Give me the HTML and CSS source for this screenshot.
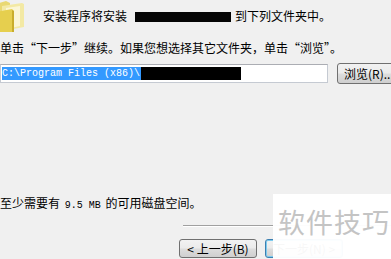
FILE: index.html
```html
<!DOCTYPE html>
<html lang="zh-CN">
<head>
  <meta charset="UTF-8">
  <title>安装位置</title>
  <link rel="stylesheet" href="styles.css">
</head>
<body>
  <div class="page">
    <div class="header">
      <svg class="folder" width="28" height="32" viewBox="0 0 28 32">
        <path d="M-4 4 L6 1 L10 3 L10 30 L-4 32 Z" fill="#e9d872"/>
        <path d="M2 6 L22 3 L24 4 L24 27 L2 31 Z" fill="#f3e9a4"/>
        <path d="M6 8 L20 6 L20 26 L6 29 Z" fill="#fbf6d6"/>
        <path d="M-4 12 L12 9 L14 11 L14 32 L-4 32 Z" fill="#e6cf4e"/>
        <path d="M12 10 L14 11 L14 32 L12 32 Z" fill="#c9ad2c"/>
      </svg>
      <div class="title">安装程序将安装 <span class="redact"></span> 到下列文件夹中。</div>
    </div>

    <p class="intro">单击“下一步”继续。如果您想选择其它文件夹，单击“浏览”。</p>

    <div class="path-row">
      <div class="path-box"><span class="sel">C:\Program Files (x86)\</span><span class="sel-black"></span></div>
      <button class="btn browse">浏览(R)...</button>
    </div>

    <p class="space">至少需要有 <span class="mono">9.5 MB</span> 的可用磁盘空间。</p>

    <div class="separator"></div>

    <div class="buttons">
      <button class="btn back">&lt; 上一步(B)</button>
      <button class="btn next">下一步(N) &gt;</button>
    </div>

    <div class="watermark">软件技巧</div>
  </div>
</body>
</html>
```

FILE: styles.css
```css
body {
  margin: 0;
  background: #f0f0f0;
  font-family: "Noto Sans CJK SC", "Noto Sans", sans-serif;
  font-size: 12px;
  color: #000;
}

.page {
  position: relative;
  width: 391px;
  height: 259px;
  overflow: hidden;
}

.header {
  display: flex;
  align-items: center;
  height: 32px;
}

.folder {
  flex: none;
}

.title {
  margin-left: 15px;
  line-height: 16px;
  display: flex;
  align-items: center;
}

.redact {
  display: inline-block;
  width: 96px;
  height: 10px;
  margin: 1px 4px 0 8px;
  background: #050505;
}

.intro {
  margin: 8px 0 0;
  line-height: 16px;
  white-space: nowrap;
}

.path-row {
  display: flex;
  align-items: flex-start;
  margin-top: 7px;
  height: 21px;
}

.path-box {
  flex: none;
  box-sizing: border-box;
  width: 328px;
  height: 19px;
  margin-top: 1px;
  background: #fff;
  border: 1px solid #c5cad2;
  border-top-color: #abadb3;
  display: flex;
  align-items: center;
  padding-left: 1px;
}

.sel {
  font-family: "Liberation Mono", monospace;
  font-size: 10px;
  line-height: 13px;
  background: #3399ff;
  color: #fff;
  white-space: pre;
  padding-right: 1px;
}

.sel-black {
  display: inline-block;
  width: 100px;
  height: 13px;
  background: #000;
}

.btn {
  box-sizing: border-box;
  font-family: "Noto Sans CJK SC", "Noto Sans", sans-serif;
  font-size: 12px;
  line-height: 14px;
  padding: 0;
  border: 1px solid #707070;
  border-radius: 3px;
  background: linear-gradient(#f2f2f2 0%, #ebebeb 48%, #dddddd 52%, #cfcfcf 100%);
  color: #000;
  white-space: nowrap;
}

.browse {
  flex: none;
  margin-left: 9px;
  width: 75px;
  height: 21px;
  text-align: left;
  padding-left: 6px;
}

.space {
  margin: 111px 0 0;
  line-height: 16px;
  white-space: nowrap;
}

.mono {
  font-family: "Liberation Mono", monospace;
  font-size: 10px;
  margin: 0 2px;
}

.separator {
  margin: 11px 0 0 183px;
  border-top: 1px solid #a0a0a0;
  border-bottom: 1px solid #fff;
}

.buttons {
  display: flex;
  gap: 8px;
  margin-top: 12px;
  padding-left: 179px;
}

.back,
.next {
  width: 78px;
  height: 19px;
}

.next {
  border-color: #3c7fb1;
  box-shadow: inset 0 0 0 1px #7ecbee;
}

.watermark {
  position: absolute;
  left: 273px;
  top: 194px;
  right: 0;
  bottom: 0;
  background: rgba(255, 255, 255, 0.97);
  color: #c4c4c4;
  font-size: 27px;
  line-height: 27px;
  padding: 14px 0 0 5px;
  letter-spacing: 1px;
  white-space: nowrap;
}
```
